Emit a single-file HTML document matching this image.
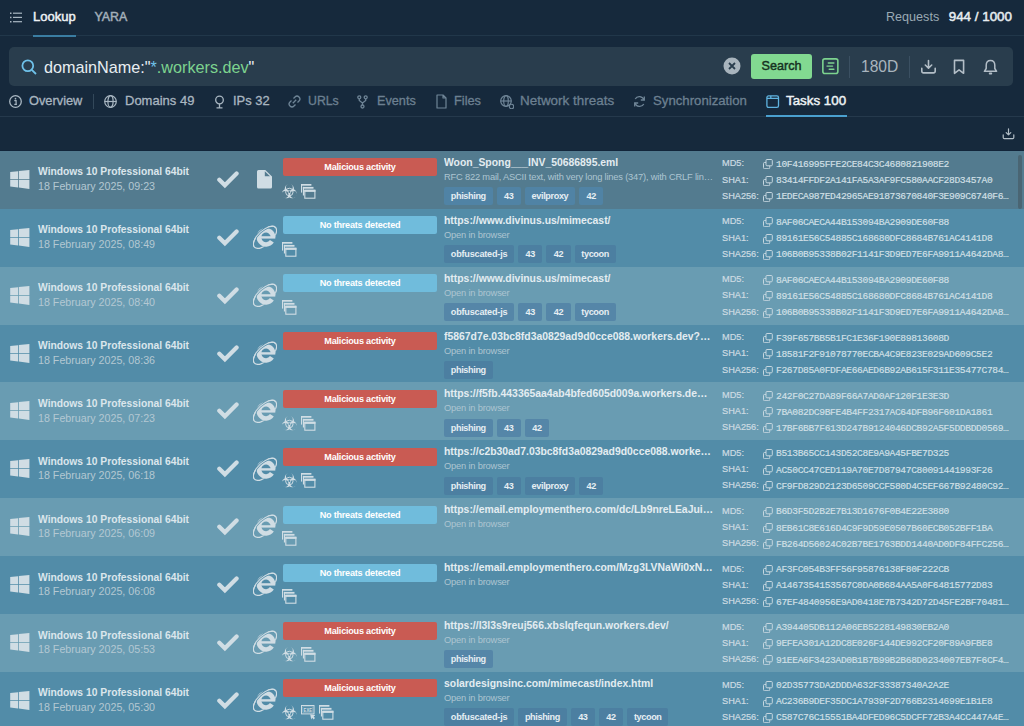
<!DOCTYPE html>
<html><head><meta charset="utf-8"><style>
*{box-sizing:border-box;margin:0;padding:0}
html,body{width:1024px;height:726px;overflow:hidden;background:#16293c;font-family:"Liberation Sans",sans-serif}
.abs{position:absolute}
#top{position:absolute;left:0;top:0;width:1024px;height:36.4px;border-bottom:1px solid #21374a}
.tb{position:absolute;top:9.3px;font-size:13px;font-weight:400;-webkit-text-stroke:0.45px currentColor;line-height:16px;white-space:nowrap}
#req{position:absolute;top:9px;left:886px;font-size:12.6px;color:#9aa9b4;line-height:16px;white-space:nowrap}
#req b{color:#e7edf1;font-size:13.4px;margin-left:9.5px;font-weight:400;-webkit-text-stroke:0.5px currentColor}
#sbox{position:absolute;left:9px;top:47px;width:1004px;height:39px;background:#293d4d;border-radius:5px}
#q{position:absolute;left:44px;top:57px;font-size:16.2px;color:#e8eef2;line-height:20px;white-space:nowrap}
#q .s{color:#6fc2ea} #q .g{color:#7dd38f}
#sbtn{position:absolute;left:751px;top:54px;width:61px;height:25px;background:#82d991;border-radius:3px;color:#173222;font-weight:400;-webkit-text-stroke:0.45px currentColor;font-size:12.6px;line-height:25px;text-align:center}
.vd{position:absolute;width:1px;background:#3b5062}
#d180{position:absolute;left:861px;top:57px;font-size:15.6px;color:#a9b5be;line-height:20px}
#tabs{position:absolute;left:0;top:92px;width:1024px;height:25px;border-bottom:1px solid #25394c}
.tab{position:absolute;top:92.7px;font-size:12.9px;-webkit-text-stroke:0.3px currentColor;line-height:16px;white-space:nowrap}
.t1{color:#a9b6c0} .t2{color:#6c8091} .t3{color:#eef3f6;-webkit-text-stroke:0.45px currentColor}
.row{position:absolute;left:0;width:1024px;height:58px;overflow:hidden}
.row.hov{background:#537b8f} .row.dark{background:#528ca8} .row.light{background:#699cb2}
.wl{position:absolute;left:10px;top:19px}
.osn{position:absolute;left:38px;top:15.5px;font-size:10.3px;font-weight:700;color:#dbe6ec;line-height:12px;white-space:nowrap}
.dt{position:absolute;left:38px;top:29.2px;font-size:10.7px;color:#b4c8d2;line-height:12px;white-space:nowrap}
.ck{position:absolute;left:217.3px;top:20px}
.os{position:absolute}
.badge{position:absolute;left:283px;top:7.6px;width:154px;height:18px;border-radius:2px;color:#fff;font-weight:700;font-size:9.1px;letter-spacing:-0.22px;line-height:18px;text-align:center}
.badge.mal{background:#c95b53} .badge.no{background:#70bcdc}
.sicons{position:absolute;left:282.3px;top:33.2px;height:15px;display:flex;gap:3.5px}
.si svg{display:block}
.ttl{position:absolute;left:444px;top:6px;width:272px;overflow:hidden;font-size:10.4px;font-weight:700;color:#e3ecf1;line-height:12px;white-space:nowrap}
.sub{position:absolute;left:444px;top:20px;width:270px;overflow:hidden;font-size:9.3px;letter-spacing:-0.18px;color:#adc5d1;line-height:12px;white-space:nowrap}
.tags{position:absolute;left:444px;top:36.3px;height:18px;display:flex;gap:4px}
.tag{display:block;height:18px;padding:0 6.8px;background:#4c7fa1;border-radius:2px;color:#e6eef3;font-weight:700;font-size:9.1px;letter-spacing:-0.36px;line-height:18px;white-space:nowrap}
.tag.num{padding:0 7.4px}
.row.hov .tag{background:#5083a5}
.row.light .tag{background:#5586a8}
.hl{position:absolute;left:722px;height:12px;width:300px;white-space:nowrap}
.lab{position:absolute;left:0;top:-1.5px;font-size:9.2px;-webkit-text-stroke:0.2px currentColor;color:#cddbe2;line-height:12px}
.cp{position:absolute;left:40.5px;top:0.5px} .cp svg{display:block}
.hv{position:absolute;left:54px;top:0;font-family:"Liberation Mono",monospace;font-size:9.6px;letter-spacing:-0.35px;-webkit-text-stroke:0.15px currentColor;color:#d3e0e7;line-height:12px}
#scroll{position:absolute;left:1018px;top:155px;width:4px;height:54px;background:#4a6573;border-radius:2px}
</style></head><body>
<div id="top"></div>
<svg class="abs" style="left:10px;top:12px" width="12" height="11" viewBox="0 0 12 11"><g fill="#a9b7c2"><rect x="0" y="0.5" width="1.5" height="1.5"/><rect x="0" y="4.7" width="1.5" height="1.5"/><rect x="0" y="9" width="1.5" height="1.5"/><rect x="3" y="0.6" width="9" height="1.2"/><rect x="3" y="4.8" width="9" height="1.2"/><rect x="3" y="9.1" width="9" height="1.2"/></g></svg>
<div class="tb" style="left:33px;color:#eef2f5">Lookup</div>
<div class="tb" style="left:94.5px;color:#a3b0ba;font-size:12.4px">YARA</div>
<div class="abs" style="left:33px;top:35px;width:43px;height:2px;background:#3a7da2"></div>
<div id="req">Requests<b>944 / 1000</b></div>
<div id="sbox"></div>
<svg class="abs" style="left:21px;top:59px" width="16" height="16" viewBox="0 0 16 16"><circle cx="6.8" cy="6.8" r="5.4" fill="none" stroke="#6fc2ea" stroke-width="1.8"/><path d="M10.8 10.8L15 15" stroke="#6fc2ea" stroke-width="1.8"/></svg>
<div id="q">domainName:"<span class="s">*</span><span class="g">.workers.dev</span>"</div>
<svg class="abs" style="left:723px;top:57px" width="18" height="18" viewBox="0 0 18 18"><circle cx="9" cy="9" r="8.5" fill="#a8b4bd"/><path d="M6 6L12 12M12 6L6 12" stroke="#293d4d" stroke-width="1.8"/></svg>
<div id="sbtn">Search</div>
<svg class="abs" style="left:822px;top:58px" width="17" height="17" viewBox="0 0 17 17"><rect x="0.85" y="0.85" width="15" height="14.7" rx="2" fill="none" stroke="#7dd38f" stroke-width="1.6"/><path d="M6.3 5H11.9M5 8.1H10.6M7.2 11.2H11.9" stroke="#7dd38f" stroke-width="1.4" stroke-linecap="round"/></svg>
<div class="vd" style="left:849px;top:56px;height:22px"></div>
<div id="d180">180D</div>
<div class="vd" style="left:909px;top:56px;height:22px"></div>
<svg class="abs" style="left:920px;top:58.5px" width="17" height="16" viewBox="0 0 17 16"><g fill="none" stroke="#b3bec7" stroke-width="1.6" stroke-linecap="round" stroke-linejoin="round"><path d="M8.5 1.5V9M5.3 6L8.5 9.2L11.7 6"/><path d="M1.8 9.3V12.3A1.6 1.6 0 0 0 3.4 13.9H13.6A1.6 1.6 0 0 0 15.2 12.3V9.3"/></g></svg>
<svg class="abs" style="left:953px;top:58.5px" width="12" height="16" viewBox="0 0 12 16"><path d="M1.5 1.4H10.6V14.3L6.05 10.9L1.5 14.3Z" fill="none" stroke="#b3bec7" stroke-width="1.6" stroke-linejoin="round"/></svg>
<svg class="abs" style="left:982.5px;top:58.5px" width="15" height="17" viewBox="0 0 15 17"><path d="M7.5 1.4C4.7 1.4 3.2 3.6 3.2 6.3V9.5L1.4 12.3H13.6L11.8 9.5V6.3C11.8 3.6 10.3 1.4 7.5 1.4Z" fill="none" stroke="#b3bec7" stroke-width="1.5" stroke-linejoin="round"/><rect x="5.8" y="13.6" width="3.4" height="2" rx="0.8" fill="#b3bec7"/></svg>
<div id="tabs"></div>

<svg class="abs" style="left:9px;top:95px" width="13" height="13" viewBox="0 0 13 13"><circle cx="6.5" cy="6.5" r="5.8" fill="none" stroke="#a9b7c2" stroke-width="1.3"/><circle cx="6.5" cy="3.7" r="0.85" fill="#a9b7c2"/><path d="M5.3 5.6H7.1V9.4H7.9M5.3 9.4H7.9" fill="none" stroke="#a9b7c2" stroke-width="1.2"/></svg>
<div class="tab t1" style="left:29px;font-size:12.8px">Overview</div>
<div class="vd" style="left:93px;top:94px;height:15px;background:#33485a"></div>
<svg class="abs" style="left:104px;top:95px" width="13" height="13" viewBox="0 0 13 13"><g fill="none" stroke="#a9b7c2" stroke-width="1.2"><circle cx="6.5" cy="6.5" r="5.8"/><ellipse cx="6.5" cy="6.5" rx="2.6" ry="5.8"/><path d="M0.7 6.5H12.3"/></g></svg>
<div class="tab t1" style="left:125px;font-size:13px">Domains 49</div>
<svg class="abs" style="left:214px;top:95px" width="11" height="14" viewBox="0 0 11 14"><g fill="none" stroke="#a9b7c2" stroke-width="1.3"><circle cx="5.5" cy="5" r="3.8"/><path d="M5.5 8.8V12.5M2.5 12.8H8.5"/></g></svg>
<div class="tab t1" style="left:233px;font-size:12.9px">IPs 32</div>
<svg class="abs" style="left:288px;top:95px" width="13" height="13" viewBox="0 0 13 13"><g fill="none" stroke="#6f8597" stroke-width="1.3"><path d="M5.5 3.5L7 2A2.5 2.5 0 0 1 11 6L9.5 7.5"/><path d="M7.5 9.5L6 11A2.5 2.5 0 0 1 2 7L3.5 5.5"/><path d="M4.8 8.2L8.2 4.8"/></g></svg>
<div class="tab t2" style="left:308px;font-size:12.3px">URLs</div>
<svg class="abs" style="left:357px;top:95px" width="11" height="14" viewBox="0 0 11 14"><g fill="none" stroke="#6f8597" stroke-width="1.3"><circle cx="2.3" cy="2.3" r="1.5"/><circle cx="8.7" cy="2.3" r="1.5"/><circle cx="5.5" cy="11.5" r="1.5"/><path d="M2.3 3.8V5.5L5.5 8V10M8.7 3.8V5.5L5.5 8"/></g></svg>
<div class="tab t2" style="left:377px;font-size:12.7px">Events</div>
<svg class="abs" style="left:436px;top:94px" width="11" height="15" viewBox="0 0 11 15"><path d="M1 1H7L10 4V14H1Z M7 1V4H10" fill="none" stroke="#6f8597" stroke-width="1.2" stroke-linejoin="round"/></svg>
<div class="tab t2" style="left:454px;font-size:12.8px">Files</div>
<svg class="abs" style="left:500px;top:95px" width="14" height="14" viewBox="0 0 14 14"><g fill="none" stroke="#6f8597" stroke-width="1.2"><circle cx="6" cy="6" r="5.3"/><ellipse cx="6" cy="6" rx="2.3" ry="5.3"/><path d="M0.7 6H11.3"/></g><circle cx="11.5" cy="11.5" r="2.2" fill="#16293c" stroke="#6f8597" stroke-width="1.1"/></svg>
<div class="tab t2" style="left:520px;font-size:13.45px">Network threats</div>
<svg class="abs" style="left:633px;top:95px" width="13" height="13" viewBox="0 0 13 13"><g fill="none" stroke="#6f8597" stroke-width="1.3"><path d="M11 5A4.8 4.8 0 0 0 2.2 4"/><path d="M2 8A4.8 4.8 0 0 0 10.8 9"/><path d="M11.3 1.5V5H7.8"/><path d="M1.7 11.5V8H5.2"/></g></svg>
<div class="tab t2" style="left:653px;font-size:13.2px">Synchronization</div>
<svg class="abs" style="left:765.5px;top:94.5px" width="14" height="14" viewBox="0 0 14 14"><g fill="none" stroke="#5fb3df" stroke-width="1.3"><rect x="0.9" y="0.9" width="11.6" height="11.5" rx="1.6"/><path d="M0.9 3.3H12.5M4.8 0.9V3.3"/></g></svg>
<div class="tab t3" style="left:786px;font-size:13.35px">Tasks 100</div>
<div class="abs" style="left:766px;top:115.3px;width:81px;height:1.8px;background:#4aa0cf"></div>

<svg class="abs" style="left:1001.5px;top:128px" width="13" height="12" viewBox="0 0 13 12"><g fill="none" stroke="#b3bec7" stroke-width="1.2" stroke-linecap="round" stroke-linejoin="round"><path d="M6.5 0.8V6.8M4.2 4.6L6.5 6.9L8.8 4.6"/><path d="M1.2 6.8V9.6A1.1 1.1 0 0 0 2.3 10.7H10.7A1.1 1.1 0 0 0 11.8 9.6V6.8"/></g></svg>
<div class="row hov" style="top:150.8px">
 <svg class="wl" width="20" height="20" viewBox="0 0 20 20"><path fill="#d0dde4" d="M0.2 2.0L8 1.2V8.95H0.2Z M8.8 1.1L19.4 0V8.95H8.8Z M0.2 9.75H8V17.5L0.2 16.5Z M8.8 9.75H19.4V19L8.8 17.6Z"/></svg>
 <div class="osn">Windows 10 Professional 64bit</div>
 <div class="dt">18 February 2025, 09:23</div>
 <svg class="ck" width="22" height="18" viewBox="0 0 22 18"><path fill="none" stroke="#d0dde4" stroke-width="4.2" stroke-linecap="round" stroke-linejoin="miter" d="M2.3 8.7L7.9 14.3L19.6 2.6"/></svg>
 <svg class="os" style="left:257px;top:19px" width="15" height="19" viewBox="0 0 15 19"><path fill="#d0dde4" d="M1.5 0H8.3L15 6.5V17A1.5 1.5 0 0 1 13.5 18.5H1.5A1.5 1.5 0 0 1 0 17V1.5A1.5 1.5 0 0 1 1.5 0Z"/><path fill="#537b8f" d="M7.8 1.2V6.2H13Z"/></svg>
 <div class="badge mal">Malicious activity</div>
 <div class="sicons"><span class="si si-bio"><svg width="15" height="15" viewBox="0 0 15 15"><defs><mask id="BIOM"><rect width="15" height="15" fill="#000"/><g fill="#fff"><circle cx="7.35" cy="4.70" r="4.6"/><circle cx="10.21" cy="9.65" r="4.6"/><circle cx="4.49" cy="9.65" r="4.6"/></g><g fill="#000"><circle cx="7.35" cy="3.00" r="3.4"/><circle cx="11.68" cy="10.50" r="3.4"/><circle cx="3.02" cy="10.50" r="3.4"/></g><circle cx="7.35" cy="8.0" r="3.75" fill="none" stroke="#fff" stroke-width="0.95"/><circle cx="7.35" cy="8.0" r="0.95" fill="#000"/></mask></defs><rect width="15" height="15" fill="#d0dde4" mask="url(#BIOM)"/></svg></span><span class="si si-win"><svg width="15" height="15" viewBox="0 0 15 15"><g fill="#d0dde4"><rect x="0" y="0" width="10.4" height="1.7"/><rect x="0" y="0" width="1.1" height="8.6"/><rect x="1.9" y="2.9" width="10.6" height="1.8"/><rect x="1.9" y="2.9" width="1.1" height="8.6"/></g><rect x="3.8" y="6.3" width="10.1" height="7.9" fill="#537b8f" stroke="#d0dde4" stroke-width="1.1"/><rect x="3.25" y="5.8" width="11.2" height="2.1" fill="#d0dde4"/></svg></span></div>
 <div class="ttl">Woon_Spong___INV_50686895.eml</div>
 <div class="sub">RFC 822 mail, ASCII text, with very long lines (347), with CRLF lin…</div>
 <div class="tags"><span class="tag">phishing</span><span class="tag num">43</span><span class="tag">evilproxy</span><span class="tag num">42</span></div>
 <div class="hl" style="top:8.2px"><span class="lab">MD5:</span><span class="cp"><svg width="10" height="10" viewBox="0 0 10 10"><g fill="none" stroke="#c5d6df" stroke-width="1"><rect x="3" y="0.5" width="6.3" height="6.3" rx="1"/><path d="M3 3.5H1.5A1 1 0 0 0 0.5 4.5V8.7A1 1 0 0 0 1.5 9.7H5.7A1 1 0 0 0 6.7 8.7V6.8"/></g></svg></span><span class="hv">10F416995FFE2CE84C3C4680821908E2</span></div><div class="hl" style="top:24.4px"><span class="lab">SHA1:</span><span class="cp"><svg width="10" height="10" viewBox="0 0 10 10"><g fill="none" stroke="#c5d6df" stroke-width="1"><rect x="3" y="0.5" width="6.3" height="6.3" rx="1"/><path d="M3 3.5H1.5A1 1 0 0 0 0.5 4.5V8.7A1 1 0 0 0 1.5 9.7H5.7A1 1 0 0 0 6.7 8.7V6.8"/></g></svg></span><span class="hv">83414FFDF2A141FA5A3AF9FC580AACF28D3457A0</span></div><div class="hl" style="top:40.6px"><span class="lab">SHA256:</span><span class="cp"><svg width="10" height="10" viewBox="0 0 10 10"><g fill="none" stroke="#c5d6df" stroke-width="1"><rect x="3" y="0.5" width="6.3" height="6.3" rx="1"/><path d="M3 3.5H1.5A1 1 0 0 0 0.5 4.5V8.7A1 1 0 0 0 1.5 9.7H5.7A1 1 0 0 0 6.7 8.7V6.8"/></g></svg></span><span class="hv">1EDECA987ED42965AE91873670840F3E909C6740F6…</span></div>
</div><div class="row dark" style="top:208.7px">
 <svg class="wl" width="20" height="20" viewBox="0 0 20 20"><path fill="#d0dde4" d="M0.2 2.0L8 1.2V8.95H0.2Z M8.8 1.1L19.4 0V8.95H8.8Z M0.2 9.75H8V17.5L0.2 16.5Z M8.8 9.75H19.4V19L8.8 17.6Z"/></svg>
 <div class="osn">Windows 10 Professional 64bit</div>
 <div class="dt">18 February 2025, 08:49</div>
 <svg class="ck" width="22" height="18" viewBox="0 0 22 18"><path fill="none" stroke="#d0dde4" stroke-width="4.2" stroke-linecap="round" stroke-linejoin="miter" d="M2.3 8.7L7.9 14.3L19.6 2.6"/></svg>
 <svg class="os" style="left:253px;top:16.3px" width="24" height="24" viewBox="0 0 24 24"><defs><mask id="IEM"><rect x="-5" y="-5" width="34" height="34" fill="#fff"/><circle cx="12.8" cy="12.2" r="10" fill="#000"/></mask><clipPath id="IEC"><path d="M-3.5 25.4L27.3 -2.3V-10H-10V25.4Z"/></clipPath></defs><path d="M20.1 12.2A7.1 7.1 0 1 0 18.9 16.3" fill="none" stroke="#d0dde4" stroke-width="4.6"/><path d="M6 12.4H22.3" stroke="#d0dde4" stroke-width="2.4"/><g clip-path="url(#IEC)"><ellipse cx="12.0" cy="12.3" rx="14.4" ry="7.0" transform="rotate(-43 12.0 12.3)" fill="none" stroke="#528ca8" stroke-width="2.4"/><ellipse cx="12.0" cy="12.3" rx="14.4" ry="7.0" transform="rotate(-43 12.0 12.3)" fill="none" stroke="#d0dde4" stroke-width="1.0"/></g><ellipse cx="12.0" cy="12.3" rx="14.4" ry="7.0" transform="rotate(-43 12.0 12.3)" fill="none" stroke="#d0dde4" stroke-width="1.2" mask="url(#IEM)"/></svg>
 <div class="badge no">No threats detected</div>
 <div class="sicons"><span class="si si-win"><svg width="15" height="15" viewBox="0 0 15 15"><g fill="#d0dde4"><rect x="0" y="0" width="10.4" height="1.7"/><rect x="0" y="0" width="1.1" height="8.6"/><rect x="1.9" y="2.9" width="10.6" height="1.8"/><rect x="1.9" y="2.9" width="1.1" height="8.6"/></g><rect x="3.8" y="6.3" width="10.1" height="7.9" fill="#528ca8" stroke="#d0dde4" stroke-width="1.1"/><rect x="3.25" y="5.8" width="11.2" height="2.1" fill="#d0dde4"/></svg></span></div>
 <div class="ttl">https://www.divinus.us/mimecast/</div>
 <div class="sub">Open in browser</div>
 <div class="tags"><span class="tag" style="letter-spacing:-0.2px">obfuscated-js</span><span class="tag num">43</span><span class="tag num">42</span><span class="tag">tycoon</span></div>
 <div class="hl" style="top:8.2px"><span class="lab">MD5:</span><span class="cp"><svg width="10" height="10" viewBox="0 0 10 10"><g fill="none" stroke="#c5d6df" stroke-width="1"><rect x="3" y="0.5" width="6.3" height="6.3" rx="1"/><path d="M3 3.5H1.5A1 1 0 0 0 0.5 4.5V8.7A1 1 0 0 0 1.5 9.7H5.7A1 1 0 0 0 6.7 8.7V6.8"/></g></svg></span><span class="hv">8AF06CAECA44B153094BA2909DE60F88</span></div><div class="hl" style="top:24.4px"><span class="lab">SHA1:</span><span class="cp"><svg width="10" height="10" viewBox="0 0 10 10"><g fill="none" stroke="#c5d6df" stroke-width="1"><rect x="3" y="0.5" width="6.3" height="6.3" rx="1"/><path d="M3 3.5H1.5A1 1 0 0 0 0.5 4.5V8.7A1 1 0 0 0 1.5 9.7H5.7A1 1 0 0 0 6.7 8.7V6.8"/></g></svg></span><span class="hv">89161E56C54885C168680DFC8684B761AC4141D8</span></div><div class="hl" style="top:40.6px"><span class="lab">SHA256:</span><span class="cp"><svg width="10" height="10" viewBox="0 0 10 10"><g fill="none" stroke="#c5d6df" stroke-width="1"><rect x="3" y="0.5" width="6.3" height="6.3" rx="1"/><path d="M3 3.5H1.5A1 1 0 0 0 0.5 4.5V8.7A1 1 0 0 0 1.5 9.7H5.7A1 1 0 0 0 6.7 8.7V6.8"/></g></svg></span><span class="hv">106B0B95338B02F1141F3D9ED7E6FA9911A4642DA8…</span></div>
</div><div class="row light" style="top:266.6px">
 <svg class="wl" width="20" height="20" viewBox="0 0 20 20"><path fill="#d0dde4" d="M0.2 2.0L8 1.2V8.95H0.2Z M8.8 1.1L19.4 0V8.95H8.8Z M0.2 9.75H8V17.5L0.2 16.5Z M8.8 9.75H19.4V19L8.8 17.6Z"/></svg>
 <div class="osn">Windows 10 Professional 64bit</div>
 <div class="dt">18 February 2025, 08:40</div>
 <svg class="ck" width="22" height="18" viewBox="0 0 22 18"><path fill="none" stroke="#d0dde4" stroke-width="4.2" stroke-linecap="round" stroke-linejoin="miter" d="M2.3 8.7L7.9 14.3L19.6 2.6"/></svg>
 <svg class="os" style="left:253px;top:16.3px" width="24" height="24" viewBox="0 0 24 24"><defs><mask id="IEM"><rect x="-5" y="-5" width="34" height="34" fill="#fff"/><circle cx="12.8" cy="12.2" r="10" fill="#000"/></mask><clipPath id="IEC"><path d="M-3.5 25.4L27.3 -2.3V-10H-10V25.4Z"/></clipPath></defs><path d="M20.1 12.2A7.1 7.1 0 1 0 18.9 16.3" fill="none" stroke="#d0dde4" stroke-width="4.6"/><path d="M6 12.4H22.3" stroke="#d0dde4" stroke-width="2.4"/><g clip-path="url(#IEC)"><ellipse cx="12.0" cy="12.3" rx="14.4" ry="7.0" transform="rotate(-43 12.0 12.3)" fill="none" stroke="#699cb2" stroke-width="2.4"/><ellipse cx="12.0" cy="12.3" rx="14.4" ry="7.0" transform="rotate(-43 12.0 12.3)" fill="none" stroke="#d0dde4" stroke-width="1.0"/></g><ellipse cx="12.0" cy="12.3" rx="14.4" ry="7.0" transform="rotate(-43 12.0 12.3)" fill="none" stroke="#d0dde4" stroke-width="1.2" mask="url(#IEM)"/></svg>
 <div class="badge no">No threats detected</div>
 <div class="sicons"><span class="si si-win"><svg width="15" height="15" viewBox="0 0 15 15"><g fill="#d0dde4"><rect x="0" y="0" width="10.4" height="1.7"/><rect x="0" y="0" width="1.1" height="8.6"/><rect x="1.9" y="2.9" width="10.6" height="1.8"/><rect x="1.9" y="2.9" width="1.1" height="8.6"/></g><rect x="3.8" y="6.3" width="10.1" height="7.9" fill="#699cb2" stroke="#d0dde4" stroke-width="1.1"/><rect x="3.25" y="5.8" width="11.2" height="2.1" fill="#d0dde4"/></svg></span></div>
 <div class="ttl">https://www.divinus.us/mimecast/</div>
 <div class="sub">Open in browser</div>
 <div class="tags"><span class="tag" style="letter-spacing:-0.2px">obfuscated-js</span><span class="tag num">43</span><span class="tag num">42</span><span class="tag">tycoon</span></div>
 <div class="hl" style="top:8.2px"><span class="lab">MD5:</span><span class="cp"><svg width="10" height="10" viewBox="0 0 10 10"><g fill="none" stroke="#c5d6df" stroke-width="1"><rect x="3" y="0.5" width="6.3" height="6.3" rx="1"/><path d="M3 3.5H1.5A1 1 0 0 0 0.5 4.5V8.7A1 1 0 0 0 1.5 9.7H5.7A1 1 0 0 0 6.7 8.7V6.8"/></g></svg></span><span class="hv">8AF06CAECA44B153094BA2909DE60F88</span></div><div class="hl" style="top:24.4px"><span class="lab">SHA1:</span><span class="cp"><svg width="10" height="10" viewBox="0 0 10 10"><g fill="none" stroke="#c5d6df" stroke-width="1"><rect x="3" y="0.5" width="6.3" height="6.3" rx="1"/><path d="M3 3.5H1.5A1 1 0 0 0 0.5 4.5V8.7A1 1 0 0 0 1.5 9.7H5.7A1 1 0 0 0 6.7 8.7V6.8"/></g></svg></span><span class="hv">89161E56C54885C168680DFC8684B761AC4141D8</span></div><div class="hl" style="top:40.6px"><span class="lab">SHA256:</span><span class="cp"><svg width="10" height="10" viewBox="0 0 10 10"><g fill="none" stroke="#c5d6df" stroke-width="1"><rect x="3" y="0.5" width="6.3" height="6.3" rx="1"/><path d="M3 3.5H1.5A1 1 0 0 0 0.5 4.5V8.7A1 1 0 0 0 1.5 9.7H5.7A1 1 0 0 0 6.7 8.7V6.8"/></g></svg></span><span class="hv">106B0B95338B02F1141F3D9ED7E6FA9911A4642DA8…</span></div>
</div><div class="row dark" style="top:324.5px">
 <svg class="wl" width="20" height="20" viewBox="0 0 20 20"><path fill="#d0dde4" d="M0.2 2.0L8 1.2V8.95H0.2Z M8.8 1.1L19.4 0V8.95H8.8Z M0.2 9.75H8V17.5L0.2 16.5Z M8.8 9.75H19.4V19L8.8 17.6Z"/></svg>
 <div class="osn">Windows 10 Professional 64bit</div>
 <div class="dt">18 February 2025, 08:36</div>
 <svg class="ck" width="22" height="18" viewBox="0 0 22 18"><path fill="none" stroke="#d0dde4" stroke-width="4.2" stroke-linecap="round" stroke-linejoin="miter" d="M2.3 8.7L7.9 14.3L19.6 2.6"/></svg>
 <svg class="os" style="left:253px;top:16.3px" width="24" height="24" viewBox="0 0 24 24"><defs><mask id="IEM"><rect x="-5" y="-5" width="34" height="34" fill="#fff"/><circle cx="12.8" cy="12.2" r="10" fill="#000"/></mask><clipPath id="IEC"><path d="M-3.5 25.4L27.3 -2.3V-10H-10V25.4Z"/></clipPath></defs><path d="M20.1 12.2A7.1 7.1 0 1 0 18.9 16.3" fill="none" stroke="#d0dde4" stroke-width="4.6"/><path d="M6 12.4H22.3" stroke="#d0dde4" stroke-width="2.4"/><g clip-path="url(#IEC)"><ellipse cx="12.0" cy="12.3" rx="14.4" ry="7.0" transform="rotate(-43 12.0 12.3)" fill="none" stroke="#528ca8" stroke-width="2.4"/><ellipse cx="12.0" cy="12.3" rx="14.4" ry="7.0" transform="rotate(-43 12.0 12.3)" fill="none" stroke="#d0dde4" stroke-width="1.0"/></g><ellipse cx="12.0" cy="12.3" rx="14.4" ry="7.0" transform="rotate(-43 12.0 12.3)" fill="none" stroke="#d0dde4" stroke-width="1.2" mask="url(#IEM)"/></svg>
 <div class="badge mal">Malicious activity</div>
 <div class="sicons"></div>
 <div class="ttl">f5867d7e.03bc8fd3a0829ad9d0cce088.workers.dev?…</div>
 <div class="sub">Open in browser</div>
 <div class="tags"><span class="tag">phishing</span></div>
 <div class="hl" style="top:8.2px"><span class="lab">MD5:</span><span class="cp"><svg width="10" height="10" viewBox="0 0 10 10"><g fill="none" stroke="#c5d6df" stroke-width="1"><rect x="3" y="0.5" width="6.3" height="6.3" rx="1"/><path d="M3 3.5H1.5A1 1 0 0 0 0.5 4.5V8.7A1 1 0 0 0 1.5 9.7H5.7A1 1 0 0 0 6.7 8.7V6.8"/></g></svg></span><span class="hv">F39F657BB5B1FC1E36F190E89813608D</span></div><div class="hl" style="top:24.4px"><span class="lab">SHA1:</span><span class="cp"><svg width="10" height="10" viewBox="0 0 10 10"><g fill="none" stroke="#c5d6df" stroke-width="1"><rect x="3" y="0.5" width="6.3" height="6.3" rx="1"/><path d="M3 3.5H1.5A1 1 0 0 0 0.5 4.5V8.7A1 1 0 0 0 1.5 9.7H5.7A1 1 0 0 0 6.7 8.7V6.8"/></g></svg></span><span class="hv">18581F2F91078770ECBA4C9E823E029AD609C5E2</span></div><div class="hl" style="top:40.6px"><span class="lab">SHA256:</span><span class="cp"><svg width="10" height="10" viewBox="0 0 10 10"><g fill="none" stroke="#c5d6df" stroke-width="1"><rect x="3" y="0.5" width="6.3" height="6.3" rx="1"/><path d="M3 3.5H1.5A1 1 0 0 0 0.5 4.5V8.7A1 1 0 0 0 1.5 9.7H5.7A1 1 0 0 0 6.7 8.7V6.8"/></g></svg></span><span class="hv">F267D85A0FDFAE66AED6B92AB615F311E35477C784…</span></div>
</div><div class="row light" style="top:382.4px">
 <svg class="wl" width="20" height="20" viewBox="0 0 20 20"><path fill="#d0dde4" d="M0.2 2.0L8 1.2V8.95H0.2Z M8.8 1.1L19.4 0V8.95H8.8Z M0.2 9.75H8V17.5L0.2 16.5Z M8.8 9.75H19.4V19L8.8 17.6Z"/></svg>
 <div class="osn">Windows 10 Professional 64bit</div>
 <div class="dt">18 February 2025, 07:23</div>
 <svg class="ck" width="22" height="18" viewBox="0 0 22 18"><path fill="none" stroke="#d0dde4" stroke-width="4.2" stroke-linecap="round" stroke-linejoin="miter" d="M2.3 8.7L7.9 14.3L19.6 2.6"/></svg>
 <svg class="os" style="left:253px;top:16.3px" width="24" height="24" viewBox="0 0 24 24"><defs><mask id="IEM"><rect x="-5" y="-5" width="34" height="34" fill="#fff"/><circle cx="12.8" cy="12.2" r="10" fill="#000"/></mask><clipPath id="IEC"><path d="M-3.5 25.4L27.3 -2.3V-10H-10V25.4Z"/></clipPath></defs><path d="M20.1 12.2A7.1 7.1 0 1 0 18.9 16.3" fill="none" stroke="#d0dde4" stroke-width="4.6"/><path d="M6 12.4H22.3" stroke="#d0dde4" stroke-width="2.4"/><g clip-path="url(#IEC)"><ellipse cx="12.0" cy="12.3" rx="14.4" ry="7.0" transform="rotate(-43 12.0 12.3)" fill="none" stroke="#699cb2" stroke-width="2.4"/><ellipse cx="12.0" cy="12.3" rx="14.4" ry="7.0" transform="rotate(-43 12.0 12.3)" fill="none" stroke="#d0dde4" stroke-width="1.0"/></g><ellipse cx="12.0" cy="12.3" rx="14.4" ry="7.0" transform="rotate(-43 12.0 12.3)" fill="none" stroke="#d0dde4" stroke-width="1.2" mask="url(#IEM)"/></svg>
 <div class="badge mal">Malicious activity</div>
 <div class="sicons"><span class="si si-bio"><svg width="15" height="15" viewBox="0 0 15 15"><defs><mask id="BIOM"><rect width="15" height="15" fill="#000"/><g fill="#fff"><circle cx="7.35" cy="4.70" r="4.6"/><circle cx="10.21" cy="9.65" r="4.6"/><circle cx="4.49" cy="9.65" r="4.6"/></g><g fill="#000"><circle cx="7.35" cy="3.00" r="3.4"/><circle cx="11.68" cy="10.50" r="3.4"/><circle cx="3.02" cy="10.50" r="3.4"/></g><circle cx="7.35" cy="8.0" r="3.75" fill="none" stroke="#fff" stroke-width="0.95"/><circle cx="7.35" cy="8.0" r="0.95" fill="#000"/></mask></defs><rect width="15" height="15" fill="#d0dde4" mask="url(#BIOM)"/></svg></span><span class="si si-win"><svg width="15" height="15" viewBox="0 0 15 15"><g fill="#d0dde4"><rect x="0" y="0" width="10.4" height="1.7"/><rect x="0" y="0" width="1.1" height="8.6"/><rect x="1.9" y="2.9" width="10.6" height="1.8"/><rect x="1.9" y="2.9" width="1.1" height="8.6"/></g><rect x="3.8" y="6.3" width="10.1" height="7.9" fill="#699cb2" stroke="#d0dde4" stroke-width="1.1"/><rect x="3.25" y="5.8" width="11.2" height="2.1" fill="#d0dde4"/></svg></span></div>
 <div class="ttl">https://f5fb.443365aa4ab4bfed605d009a.workers.de…</div>
 <div class="sub">Open in browser</div>
 <div class="tags"><span class="tag">phishing</span><span class="tag num">43</span><span class="tag num">42</span></div>
 <div class="hl" style="top:8.2px"><span class="lab">MD5:</span><span class="cp"><svg width="10" height="10" viewBox="0 0 10 10"><g fill="none" stroke="#c5d6df" stroke-width="1"><rect x="3" y="0.5" width="6.3" height="6.3" rx="1"/><path d="M3 3.5H1.5A1 1 0 0 0 0.5 4.5V8.7A1 1 0 0 0 1.5 9.7H5.7A1 1 0 0 0 6.7 8.7V6.8"/></g></svg></span><span class="hv">242F0C27DA89F66A7AD0AF120F1E3E3D</span></div><div class="hl" style="top:24.4px"><span class="lab">SHA1:</span><span class="cp"><svg width="10" height="10" viewBox="0 0 10 10"><g fill="none" stroke="#c5d6df" stroke-width="1"><rect x="3" y="0.5" width="6.3" height="6.3" rx="1"/><path d="M3 3.5H1.5A1 1 0 0 0 0.5 4.5V8.7A1 1 0 0 0 1.5 9.7H5.7A1 1 0 0 0 6.7 8.7V6.8"/></g></svg></span><span class="hv">7BA082DC9BFE4B4FF2317AC64DFB96F601DA1861</span></div><div class="hl" style="top:40.6px"><span class="lab">SHA256:</span><span class="cp"><svg width="10" height="10" viewBox="0 0 10 10"><g fill="none" stroke="#c5d6df" stroke-width="1"><rect x="3" y="0.5" width="6.3" height="6.3" rx="1"/><path d="M3 3.5H1.5A1 1 0 0 0 0.5 4.5V8.7A1 1 0 0 0 1.5 9.7H5.7A1 1 0 0 0 6.7 8.7V6.8"/></g></svg></span><span class="hv">17BF6BB7F613D247B9124046DCB92A5F5DDBDD0569…</span></div>
</div><div class="row dark" style="top:440.3px">
 <svg class="wl" width="20" height="20" viewBox="0 0 20 20"><path fill="#d0dde4" d="M0.2 2.0L8 1.2V8.95H0.2Z M8.8 1.1L19.4 0V8.95H8.8Z M0.2 9.75H8V17.5L0.2 16.5Z M8.8 9.75H19.4V19L8.8 17.6Z"/></svg>
 <div class="osn">Windows 10 Professional 64bit</div>
 <div class="dt">18 February 2025, 06:18</div>
 <svg class="ck" width="22" height="18" viewBox="0 0 22 18"><path fill="none" stroke="#d0dde4" stroke-width="4.2" stroke-linecap="round" stroke-linejoin="miter" d="M2.3 8.7L7.9 14.3L19.6 2.6"/></svg>
 <svg class="os" style="left:253px;top:16.3px" width="24" height="24" viewBox="0 0 24 24"><defs><mask id="IEM"><rect x="-5" y="-5" width="34" height="34" fill="#fff"/><circle cx="12.8" cy="12.2" r="10" fill="#000"/></mask><clipPath id="IEC"><path d="M-3.5 25.4L27.3 -2.3V-10H-10V25.4Z"/></clipPath></defs><path d="M20.1 12.2A7.1 7.1 0 1 0 18.9 16.3" fill="none" stroke="#d0dde4" stroke-width="4.6"/><path d="M6 12.4H22.3" stroke="#d0dde4" stroke-width="2.4"/><g clip-path="url(#IEC)"><ellipse cx="12.0" cy="12.3" rx="14.4" ry="7.0" transform="rotate(-43 12.0 12.3)" fill="none" stroke="#528ca8" stroke-width="2.4"/><ellipse cx="12.0" cy="12.3" rx="14.4" ry="7.0" transform="rotate(-43 12.0 12.3)" fill="none" stroke="#d0dde4" stroke-width="1.0"/></g><ellipse cx="12.0" cy="12.3" rx="14.4" ry="7.0" transform="rotate(-43 12.0 12.3)" fill="none" stroke="#d0dde4" stroke-width="1.2" mask="url(#IEM)"/></svg>
 <div class="badge mal">Malicious activity</div>
 <div class="sicons"><span class="si si-bio"><svg width="15" height="15" viewBox="0 0 15 15"><defs><mask id="BIOM"><rect width="15" height="15" fill="#000"/><g fill="#fff"><circle cx="7.35" cy="4.70" r="4.6"/><circle cx="10.21" cy="9.65" r="4.6"/><circle cx="4.49" cy="9.65" r="4.6"/></g><g fill="#000"><circle cx="7.35" cy="3.00" r="3.4"/><circle cx="11.68" cy="10.50" r="3.4"/><circle cx="3.02" cy="10.50" r="3.4"/></g><circle cx="7.35" cy="8.0" r="3.75" fill="none" stroke="#fff" stroke-width="0.95"/><circle cx="7.35" cy="8.0" r="0.95" fill="#000"/></mask></defs><rect width="15" height="15" fill="#d0dde4" mask="url(#BIOM)"/></svg></span><span class="si si-win"><svg width="15" height="15" viewBox="0 0 15 15"><g fill="#d0dde4"><rect x="0" y="0" width="10.4" height="1.7"/><rect x="0" y="0" width="1.1" height="8.6"/><rect x="1.9" y="2.9" width="10.6" height="1.8"/><rect x="1.9" y="2.9" width="1.1" height="8.6"/></g><rect x="3.8" y="6.3" width="10.1" height="7.9" fill="#528ca8" stroke="#d0dde4" stroke-width="1.1"/><rect x="3.25" y="5.8" width="11.2" height="2.1" fill="#d0dde4"/></svg></span></div>
 <div class="ttl">https://c2b30ad7.03bc8fd3a0829ad9d0cce088.worke…</div>
 <div class="sub">Open in browser</div>
 <div class="tags"><span class="tag">phishing</span><span class="tag num">43</span><span class="tag">evilproxy</span><span class="tag num">42</span></div>
 <div class="hl" style="top:8.2px"><span class="lab">MD5:</span><span class="cp"><svg width="10" height="10" viewBox="0 0 10 10"><g fill="none" stroke="#c5d6df" stroke-width="1"><rect x="3" y="0.5" width="6.3" height="6.3" rx="1"/><path d="M3 3.5H1.5A1 1 0 0 0 0.5 4.5V8.7A1 1 0 0 0 1.5 9.7H5.7A1 1 0 0 0 6.7 8.7V6.8"/></g></svg></span><span class="hv">B513B65CC143D52C8E9A9A45FBE7D325</span></div><div class="hl" style="top:24.4px"><span class="lab">SHA1:</span><span class="cp"><svg width="10" height="10" viewBox="0 0 10 10"><g fill="none" stroke="#c5d6df" stroke-width="1"><rect x="3" y="0.5" width="6.3" height="6.3" rx="1"/><path d="M3 3.5H1.5A1 1 0 0 0 0.5 4.5V8.7A1 1 0 0 0 1.5 9.7H5.7A1 1 0 0 0 6.7 8.7V6.8"/></g></svg></span><span class="hv">AC50CC47CED119A70E7D87947C80091441993F26</span></div><div class="hl" style="top:40.6px"><span class="lab">SHA256:</span><span class="cp"><svg width="10" height="10" viewBox="0 0 10 10"><g fill="none" stroke="#c5d6df" stroke-width="1"><rect x="3" y="0.5" width="6.3" height="6.3" rx="1"/><path d="M3 3.5H1.5A1 1 0 0 0 0.5 4.5V8.7A1 1 0 0 0 1.5 9.7H5.7A1 1 0 0 0 6.7 8.7V6.8"/></g></svg></span><span class="hv">CF9FD829D2123D6509CCF580D4C5EF667B92480C92…</span></div>
</div><div class="row light" style="top:498.2px">
 <svg class="wl" width="20" height="20" viewBox="0 0 20 20"><path fill="#d0dde4" d="M0.2 2.0L8 1.2V8.95H0.2Z M8.8 1.1L19.4 0V8.95H8.8Z M0.2 9.75H8V17.5L0.2 16.5Z M8.8 9.75H19.4V19L8.8 17.6Z"/></svg>
 <div class="osn">Windows 10 Professional 64bit</div>
 <div class="dt">18 February 2025, 06:09</div>
 <svg class="ck" width="22" height="18" viewBox="0 0 22 18"><path fill="none" stroke="#d0dde4" stroke-width="4.2" stroke-linecap="round" stroke-linejoin="miter" d="M2.3 8.7L7.9 14.3L19.6 2.6"/></svg>
 <svg class="os" style="left:253px;top:16.3px" width="24" height="24" viewBox="0 0 24 24"><defs><mask id="IEM"><rect x="-5" y="-5" width="34" height="34" fill="#fff"/><circle cx="12.8" cy="12.2" r="10" fill="#000"/></mask><clipPath id="IEC"><path d="M-3.5 25.4L27.3 -2.3V-10H-10V25.4Z"/></clipPath></defs><path d="M20.1 12.2A7.1 7.1 0 1 0 18.9 16.3" fill="none" stroke="#d0dde4" stroke-width="4.6"/><path d="M6 12.4H22.3" stroke="#d0dde4" stroke-width="2.4"/><g clip-path="url(#IEC)"><ellipse cx="12.0" cy="12.3" rx="14.4" ry="7.0" transform="rotate(-43 12.0 12.3)" fill="none" stroke="#699cb2" stroke-width="2.4"/><ellipse cx="12.0" cy="12.3" rx="14.4" ry="7.0" transform="rotate(-43 12.0 12.3)" fill="none" stroke="#d0dde4" stroke-width="1.0"/></g><ellipse cx="12.0" cy="12.3" rx="14.4" ry="7.0" transform="rotate(-43 12.0 12.3)" fill="none" stroke="#d0dde4" stroke-width="1.2" mask="url(#IEM)"/></svg>
 <div class="badge no">No threats detected</div>
 <div class="sicons"><span class="si si-win"><svg width="15" height="15" viewBox="0 0 15 15"><g fill="#d0dde4"><rect x="0" y="0" width="10.4" height="1.7"/><rect x="0" y="0" width="1.1" height="8.6"/><rect x="1.9" y="2.9" width="10.6" height="1.8"/><rect x="1.9" y="2.9" width="1.1" height="8.6"/></g><rect x="3.8" y="6.3" width="10.1" height="7.9" fill="#699cb2" stroke="#d0dde4" stroke-width="1.1"/><rect x="3.25" y="5.8" width="11.2" height="2.1" fill="#d0dde4"/></svg></span></div>
 <div class="ttl">https://email.employmenthero.com/dc/Lb9nreLEaJui…</div>
 <div class="sub">Open in browser</div>
 <div class="tags"></div>
 <div class="hl" style="top:8.2px"><span class="lab">MD5:</span><span class="cp"><svg width="10" height="10" viewBox="0 0 10 10"><g fill="none" stroke="#c5d6df" stroke-width="1"><rect x="3" y="0.5" width="6.3" height="6.3" rx="1"/><path d="M3 3.5H1.5A1 1 0 0 0 0.5 4.5V8.7A1 1 0 0 0 1.5 9.7H5.7A1 1 0 0 0 6.7 8.7V6.8"/></g></svg></span><span class="hv">B6D3F5D2B2E7B13D1676F0B4E22E3880</span></div><div class="hl" style="top:24.4px"><span class="lab">SHA1:</span><span class="cp"><svg width="10" height="10" viewBox="0 0 10 10"><g fill="none" stroke="#c5d6df" stroke-width="1"><rect x="3" y="0.5" width="6.3" height="6.3" rx="1"/><path d="M3 3.5H1.5A1 1 0 0 0 0.5 4.5V8.7A1 1 0 0 0 1.5 9.7H5.7A1 1 0 0 0 6.7 8.7V6.8"/></g></svg></span><span class="hv">8EB61C8E616D4C9F9D59E0507B60ECB052BFF1BA</span></div><div class="hl" style="top:40.6px"><span class="lab">SHA256:</span><span class="cp"><svg width="10" height="10" viewBox="0 0 10 10"><g fill="none" stroke="#c5d6df" stroke-width="1"><rect x="3" y="0.5" width="6.3" height="6.3" rx="1"/><path d="M3 3.5H1.5A1 1 0 0 0 0.5 4.5V8.7A1 1 0 0 0 1.5 9.7H5.7A1 1 0 0 0 6.7 8.7V6.8"/></g></svg></span><span class="hv">FB264D56024C02B7BE1763BDD1440AD0DF84FFC256…</span></div>
</div><div class="row dark" style="top:556.1px">
 <svg class="wl" width="20" height="20" viewBox="0 0 20 20"><path fill="#d0dde4" d="M0.2 2.0L8 1.2V8.95H0.2Z M8.8 1.1L19.4 0V8.95H8.8Z M0.2 9.75H8V17.5L0.2 16.5Z M8.8 9.75H19.4V19L8.8 17.6Z"/></svg>
 <div class="osn">Windows 10 Professional 64bit</div>
 <div class="dt">18 February 2025, 06:08</div>
 <svg class="ck" width="22" height="18" viewBox="0 0 22 18"><path fill="none" stroke="#d0dde4" stroke-width="4.2" stroke-linecap="round" stroke-linejoin="miter" d="M2.3 8.7L7.9 14.3L19.6 2.6"/></svg>
 <svg class="os" style="left:253px;top:16.3px" width="24" height="24" viewBox="0 0 24 24"><defs><mask id="IEM"><rect x="-5" y="-5" width="34" height="34" fill="#fff"/><circle cx="12.8" cy="12.2" r="10" fill="#000"/></mask><clipPath id="IEC"><path d="M-3.5 25.4L27.3 -2.3V-10H-10V25.4Z"/></clipPath></defs><path d="M20.1 12.2A7.1 7.1 0 1 0 18.9 16.3" fill="none" stroke="#d0dde4" stroke-width="4.6"/><path d="M6 12.4H22.3" stroke="#d0dde4" stroke-width="2.4"/><g clip-path="url(#IEC)"><ellipse cx="12.0" cy="12.3" rx="14.4" ry="7.0" transform="rotate(-43 12.0 12.3)" fill="none" stroke="#528ca8" stroke-width="2.4"/><ellipse cx="12.0" cy="12.3" rx="14.4" ry="7.0" transform="rotate(-43 12.0 12.3)" fill="none" stroke="#d0dde4" stroke-width="1.0"/></g><ellipse cx="12.0" cy="12.3" rx="14.4" ry="7.0" transform="rotate(-43 12.0 12.3)" fill="none" stroke="#d0dde4" stroke-width="1.2" mask="url(#IEM)"/></svg>
 <div class="badge no">No threats detected</div>
 <div class="sicons"><span class="si si-win"><svg width="15" height="15" viewBox="0 0 15 15"><g fill="#d0dde4"><rect x="0" y="0" width="10.4" height="1.7"/><rect x="0" y="0" width="1.1" height="8.6"/><rect x="1.9" y="2.9" width="10.6" height="1.8"/><rect x="1.9" y="2.9" width="1.1" height="8.6"/></g><rect x="3.8" y="6.3" width="10.1" height="7.9" fill="#528ca8" stroke="#d0dde4" stroke-width="1.1"/><rect x="3.25" y="5.8" width="11.2" height="2.1" fill="#d0dde4"/></svg></span></div>
 <div class="ttl">https://email.employmenthero.com/Mzg3LVNaWi0xN…</div>
 <div class="sub">Open in browser</div>
 <div class="tags"></div>
 <div class="hl" style="top:8.2px"><span class="lab">MD5:</span><span class="cp"><svg width="10" height="10" viewBox="0 0 10 10"><g fill="none" stroke="#c5d6df" stroke-width="1"><rect x="3" y="0.5" width="6.3" height="6.3" rx="1"/><path d="M3 3.5H1.5A1 1 0 0 0 0.5 4.5V8.7A1 1 0 0 0 1.5 9.7H5.7A1 1 0 0 0 6.7 8.7V6.8"/></g></svg></span><span class="hv">AF3FC054B3FF56F95876138F80F222CB</span></div><div class="hl" style="top:24.4px"><span class="lab">SHA1:</span><span class="cp"><svg width="10" height="10" viewBox="0 0 10 10"><g fill="none" stroke="#c5d6df" stroke-width="1"><rect x="3" y="0.5" width="6.3" height="6.3" rx="1"/><path d="M3 3.5H1.5A1 1 0 0 0 0.5 4.5V8.7A1 1 0 0 0 1.5 9.7H5.7A1 1 0 0 0 6.7 8.7V6.8"/></g></svg></span><span class="hv">A1467354153567C0DA0B684AA5A0F64815772D83</span></div><div class="hl" style="top:40.6px"><span class="lab">SHA256:</span><span class="cp"><svg width="10" height="10" viewBox="0 0 10 10"><g fill="none" stroke="#c5d6df" stroke-width="1"><rect x="3" y="0.5" width="6.3" height="6.3" rx="1"/><path d="M3 3.5H1.5A1 1 0 0 0 0.5 4.5V8.7A1 1 0 0 0 1.5 9.7H5.7A1 1 0 0 0 6.7 8.7V6.8"/></g></svg></span><span class="hv">67EF4840956E9AD0418E7B7342D72D45FE2BF70481…</span></div>
</div><div class="row light" style="top:614.0px">
 <svg class="wl" width="20" height="20" viewBox="0 0 20 20"><path fill="#d0dde4" d="M0.2 2.0L8 1.2V8.95H0.2Z M8.8 1.1L19.4 0V8.95H8.8Z M0.2 9.75H8V17.5L0.2 16.5Z M8.8 9.75H19.4V19L8.8 17.6Z"/></svg>
 <div class="osn">Windows 10 Professional 64bit</div>
 <div class="dt">18 February 2025, 05:53</div>
 <svg class="ck" width="22" height="18" viewBox="0 0 22 18"><path fill="none" stroke="#d0dde4" stroke-width="4.2" stroke-linecap="round" stroke-linejoin="miter" d="M2.3 8.7L7.9 14.3L19.6 2.6"/></svg>
 <svg class="os" style="left:253px;top:16.3px" width="24" height="24" viewBox="0 0 24 24"><defs><mask id="IEM"><rect x="-5" y="-5" width="34" height="34" fill="#fff"/><circle cx="12.8" cy="12.2" r="10" fill="#000"/></mask><clipPath id="IEC"><path d="M-3.5 25.4L27.3 -2.3V-10H-10V25.4Z"/></clipPath></defs><path d="M20.1 12.2A7.1 7.1 0 1 0 18.9 16.3" fill="none" stroke="#d0dde4" stroke-width="4.6"/><path d="M6 12.4H22.3" stroke="#d0dde4" stroke-width="2.4"/><g clip-path="url(#IEC)"><ellipse cx="12.0" cy="12.3" rx="14.4" ry="7.0" transform="rotate(-43 12.0 12.3)" fill="none" stroke="#699cb2" stroke-width="2.4"/><ellipse cx="12.0" cy="12.3" rx="14.4" ry="7.0" transform="rotate(-43 12.0 12.3)" fill="none" stroke="#d0dde4" stroke-width="1.0"/></g><ellipse cx="12.0" cy="12.3" rx="14.4" ry="7.0" transform="rotate(-43 12.0 12.3)" fill="none" stroke="#d0dde4" stroke-width="1.2" mask="url(#IEM)"/></svg>
 <div class="badge mal">Malicious activity</div>
 <div class="sicons"><span class="si si-bio"><svg width="15" height="15" viewBox="0 0 15 15"><defs><mask id="BIOM"><rect width="15" height="15" fill="#000"/><g fill="#fff"><circle cx="7.35" cy="4.70" r="4.6"/><circle cx="10.21" cy="9.65" r="4.6"/><circle cx="4.49" cy="9.65" r="4.6"/></g><g fill="#000"><circle cx="7.35" cy="3.00" r="3.4"/><circle cx="11.68" cy="10.50" r="3.4"/><circle cx="3.02" cy="10.50" r="3.4"/></g><circle cx="7.35" cy="8.0" r="3.75" fill="none" stroke="#fff" stroke-width="0.95"/><circle cx="7.35" cy="8.0" r="0.95" fill="#000"/></mask></defs><rect width="15" height="15" fill="#d0dde4" mask="url(#BIOM)"/></svg></span><span class="si si-win"><svg width="15" height="15" viewBox="0 0 15 15"><g fill="#d0dde4"><rect x="0" y="0" width="10.4" height="1.7"/><rect x="0" y="0" width="1.1" height="8.6"/><rect x="1.9" y="2.9" width="10.6" height="1.8"/><rect x="1.9" y="2.9" width="1.1" height="8.6"/></g><rect x="3.8" y="6.3" width="10.1" height="7.9" fill="#699cb2" stroke="#d0dde4" stroke-width="1.1"/><rect x="3.25" y="5.8" width="11.2" height="2.1" fill="#d0dde4"/></svg></span></div>
 <div class="ttl">https://l3l3s9reuj566.xbslqfequn.workers.dev/</div>
 <div class="sub">Open in browser</div>
 <div class="tags"><span class="tag">phishing</span></div>
 <div class="hl" style="top:8.2px"><span class="lab">MD5:</span><span class="cp"><svg width="10" height="10" viewBox="0 0 10 10"><g fill="none" stroke="#c5d6df" stroke-width="1"><rect x="3" y="0.5" width="6.3" height="6.3" rx="1"/><path d="M3 3.5H1.5A1 1 0 0 0 0.5 4.5V8.7A1 1 0 0 0 1.5 9.7H5.7A1 1 0 0 0 6.7 8.7V6.8"/></g></svg></span><span class="hv">A394405DB112A06EB5228149830EB2A0</span></div><div class="hl" style="top:24.4px"><span class="lab">SHA1:</span><span class="cp"><svg width="10" height="10" viewBox="0 0 10 10"><g fill="none" stroke="#c5d6df" stroke-width="1"><rect x="3" y="0.5" width="6.3" height="6.3" rx="1"/><path d="M3 3.5H1.5A1 1 0 0 0 0.5 4.5V8.7A1 1 0 0 0 1.5 9.7H5.7A1 1 0 0 0 6.7 8.7V6.8"/></g></svg></span><span class="hv">9EFEA301A12DC8E026F144DE992CF20F89A9FBE8</span></div><div class="hl" style="top:40.6px"><span class="lab">SHA256:</span><span class="cp"><svg width="10" height="10" viewBox="0 0 10 10"><g fill="none" stroke="#c5d6df" stroke-width="1"><rect x="3" y="0.5" width="6.3" height="6.3" rx="1"/><path d="M3 3.5H1.5A1 1 0 0 0 0.5 4.5V8.7A1 1 0 0 0 1.5 9.7H5.7A1 1 0 0 0 6.7 8.7V6.8"/></g></svg></span><span class="hv">91EEA6F3423AD0B1B7B99B2B68D0234007EB7F6CF4…</span></div>
</div><div class="row dark" style="top:671.9px">
 <svg class="wl" width="20" height="20" viewBox="0 0 20 20"><path fill="#d0dde4" d="M0.2 2.0L8 1.2V8.95H0.2Z M8.8 1.1L19.4 0V8.95H8.8Z M0.2 9.75H8V17.5L0.2 16.5Z M8.8 9.75H19.4V19L8.8 17.6Z"/></svg>
 <div class="osn">Windows 10 Professional 64bit</div>
 <div class="dt">18 February 2025, 05:30</div>
 <svg class="ck" width="22" height="18" viewBox="0 0 22 18"><path fill="none" stroke="#d0dde4" stroke-width="4.2" stroke-linecap="round" stroke-linejoin="miter" d="M2.3 8.7L7.9 14.3L19.6 2.6"/></svg>
 <svg class="os" style="left:253px;top:16.3px" width="24" height="24" viewBox="0 0 24 24"><defs><mask id="IEM"><rect x="-5" y="-5" width="34" height="34" fill="#fff"/><circle cx="12.8" cy="12.2" r="10" fill="#000"/></mask><clipPath id="IEC"><path d="M-3.5 25.4L27.3 -2.3V-10H-10V25.4Z"/></clipPath></defs><path d="M20.1 12.2A7.1 7.1 0 1 0 18.9 16.3" fill="none" stroke="#d0dde4" stroke-width="4.6"/><path d="M6 12.4H22.3" stroke="#d0dde4" stroke-width="2.4"/><g clip-path="url(#IEC)"><ellipse cx="12.0" cy="12.3" rx="14.4" ry="7.0" transform="rotate(-43 12.0 12.3)" fill="none" stroke="#528ca8" stroke-width="2.4"/><ellipse cx="12.0" cy="12.3" rx="14.4" ry="7.0" transform="rotate(-43 12.0 12.3)" fill="none" stroke="#d0dde4" stroke-width="1.0"/></g><ellipse cx="12.0" cy="12.3" rx="14.4" ry="7.0" transform="rotate(-43 12.0 12.3)" fill="none" stroke="#d0dde4" stroke-width="1.2" mask="url(#IEM)"/></svg>
 <div class="badge mal">Malicious activity</div>
 <div class="sicons"><span class="si si-bio"><svg width="15" height="15" viewBox="0 0 15 15"><defs><mask id="BIOM"><rect width="15" height="15" fill="#000"/><g fill="#fff"><circle cx="7.35" cy="4.70" r="4.6"/><circle cx="10.21" cy="9.65" r="4.6"/><circle cx="4.49" cy="9.65" r="4.6"/></g><g fill="#000"><circle cx="7.35" cy="3.00" r="3.4"/><circle cx="11.68" cy="10.50" r="3.4"/><circle cx="3.02" cy="10.50" r="3.4"/></g><circle cx="7.35" cy="8.0" r="3.75" fill="none" stroke="#fff" stroke-width="0.95"/><circle cx="7.35" cy="8.0" r="0.95" fill="#000"/></mask></defs><rect width="15" height="15" fill="#d0dde4" mask="url(#BIOM)"/></svg></span><span class="si si-exe"><svg width="14.5" height="15" viewBox="0 0 14.5 15"><rect x="0.5" y="0.5" width="12.5" height="8.4" fill="none" stroke="#d0dde4" stroke-width="1"/><rect x="1.8" y="1.8" width="10" height="5.8" fill="none" stroke="#d0dde4" stroke-width="0.5" opacity="0.6"/><text x="2.6" y="6.8" font-family="Liberation Sans" font-size="5.4" font-weight="700" fill="#d0dde4" textLength="8.4" lengthAdjust="spacingAndGlyphs">EXE</text><path fill="#d0dde4" d="M9.2 9.2L14.4 10.2L12.6 11.4L14 13L12.6 14.4L11.2 12.8L10.2 14.4Z"/></svg></span><span class="si si-win"><svg width="15" height="15" viewBox="0 0 15 15"><g fill="#d0dde4"><rect x="0" y="0" width="10.4" height="1.7"/><rect x="0" y="0" width="1.1" height="8.6"/><rect x="1.9" y="2.9" width="10.6" height="1.8"/><rect x="1.9" y="2.9" width="1.1" height="8.6"/></g><rect x="3.8" y="6.3" width="10.1" height="7.9" fill="#528ca8" stroke="#d0dde4" stroke-width="1.1"/><rect x="3.25" y="5.8" width="11.2" height="2.1" fill="#d0dde4"/></svg></span></div>
 <div class="ttl">solardesignsinc.com/mimecast/index.html</div>
 <div class="sub">Open in browser</div>
 <div class="tags"><span class="tag" style="letter-spacing:-0.2px">obfuscated-js</span><span class="tag">phishing</span><span class="tag num">43</span><span class="tag num">42</span><span class="tag">tycoon</span></div>
 <div class="hl" style="top:8.2px"><span class="lab">MD5:</span><span class="cp"><svg width="10" height="10" viewBox="0 0 10 10"><g fill="none" stroke="#c5d6df" stroke-width="1"><rect x="3" y="0.5" width="6.3" height="6.3" rx="1"/><path d="M3 3.5H1.5A1 1 0 0 0 0.5 4.5V8.7A1 1 0 0 0 1.5 9.7H5.7A1 1 0 0 0 6.7 8.7V6.8"/></g></svg></span><span class="hv">02D35773DA2DDDA632F33387340A2A2E</span></div><div class="hl" style="top:24.4px"><span class="lab">SHA1:</span><span class="cp"><svg width="10" height="10" viewBox="0 0 10 10"><g fill="none" stroke="#c5d6df" stroke-width="1"><rect x="3" y="0.5" width="6.3" height="6.3" rx="1"/><path d="M3 3.5H1.5A1 1 0 0 0 0.5 4.5V8.7A1 1 0 0 0 1.5 9.7H5.7A1 1 0 0 0 6.7 8.7V6.8"/></g></svg></span><span class="hv">AC236B9DEF35DC1A7939F2D766B2314699E1B1E8</span></div><div class="hl" style="top:40.6px"><span class="lab">SHA256:</span><span class="cp"><svg width="10" height="10" viewBox="0 0 10 10"><g fill="none" stroke="#c5d6df" stroke-width="1"><rect x="3" y="0.5" width="6.3" height="6.3" rx="1"/><path d="M3 3.5H1.5A1 1 0 0 0 0.5 4.5V8.7A1 1 0 0 0 1.5 9.7H5.7A1 1 0 0 0 6.7 8.7V6.8"/></g></svg></span><span class="hv">C587C76C15551BA4DFED96C5DCFF72B3A4CC447A4E…</span></div>
</div>
<div class="abs" style="left:0;top:149.5px;width:1024px;height:1.5px;background:#12253a"></div>
<div id="scroll"></div>
</body></html>
